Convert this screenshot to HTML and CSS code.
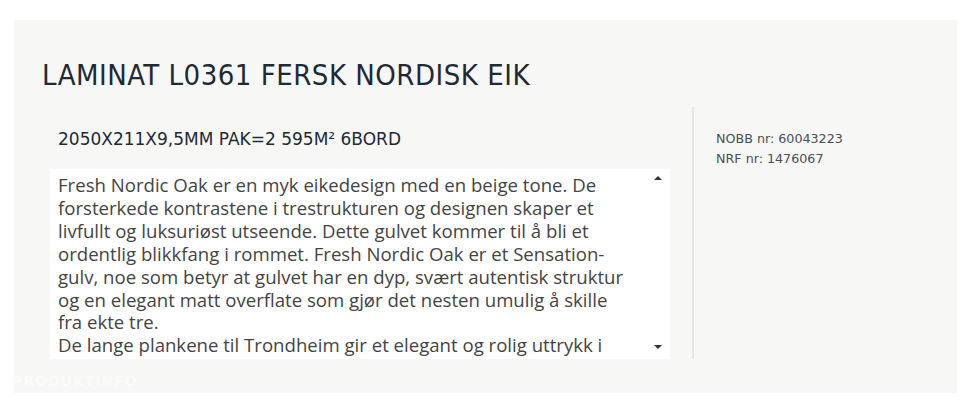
FILE: index.html
```html
<!DOCTYPE html>
<html>

<head>
    <link rel="stylesheet" href="styles.css">
</head>

<body>
    <div class="panel">
        <h1 class="title">LAMINAT L0361 FERSK NORDISK EIK</h1>
        <div class="row">
            <div class="main">
                <h2 class="dims">2050X211X9,5MM PAK=2 595M² 6BORD</h2>
                <div class="desc">
                    <div class="desc-text">Fresh Nordic Oak er en myk eikedesign med en beige tone. De
forsterkede kontrastene i trestrukturen og designen skaper et
livfullt og luksuriøst utseende. Dette gulvet kommer til å bli et
ordentlig blikkfang i rommet. Fresh Nordic Oak er et Sensation-
gulv, noe som betyr at gulvet har en dyp, svært autentisk struktur
og en elegant matt overflate som gjør det nesten umulig å skille
fra ekte tre.
De lange plankene til Trondheim gir et elegant og rolig uttrykk i</div>
                    <div class="scroll">
                        <span class="arrow up"></span>
                        <span class="arrow down"></span>
                    </div>
                </div>
            </div>
            <div class="side">
                <p>NOBB nr: 60043223</p>
                <p>NRF nr: 1476067</p>
            </div>
        </div>
        <div class="label">PRODUKTINFO</div>
    </div>
</body>

</html>
```

FILE: styles.css
```css
body {
    margin: 0;
    background-color: #fff;
    font-family: "DejaVu Sans", sans-serif;
}

.panel {
    margin: 20px 3px 0 14px;
    background-color: #f7f7f5;
    padding: 37px 0 0 28px;
    height: 336px;
}

.title {
    margin: 0;
    font-family: "DejaVu Sans Condensed", sans-serif;
    font-weight: normal;
    font-size: 29px;
    letter-spacing: 0.5px;
    line-height: 36px;
    color: #1e2a36;
}

.row {
    display: flex;
    margin-top: 14px;
}

.main {
    width: 650px;
    padding-left: 8px;
    box-sizing: border-box;
}

.dims {
    margin: 21px 0 19px 8px;
    font-weight: normal;
    font-size: 17px;
    line-height: 22px;
    color: #1e2a36;
}

.desc {
    display: flex;
    background-color: #fff;
    width: 620px;
    height: 190px;
    box-sizing: border-box;
    padding: 5px 6px 0 8px;
    overflow: hidden;
}

.desc-text {
    flex: 1;
    min-width: 0;
    overflow: hidden;
    white-space: pre;
    font-family: "Open Sans", sans-serif;
    font-size: 18.6px;
    line-height: 22.9px;
    color: #444;
}

.scroll {
    display: flex;
    flex-direction: column;
    justify-content: space-between;
    padding: 2px 2px 10px 2px;
}

.arrow {
    width: 0;
    height: 0;
    border-left: 4px solid transparent;
    border-right: 4px solid transparent;
}

.up {
    border-bottom: 4px solid #333;
}

.down {
    border-top: 4px solid #333;
}

.side {
    border-left: 2px solid #e6e6e4;
    padding: 22px 0 0 22px;
    font-size: 12.7px;
    line-height: 20px;
    color: #4a4f55;
}

.side p {
    margin: 0;
}

.label {
    margin: 14px 0 0 -30px;
    font-weight: bold;
    font-size: 14px;
    letter-spacing: 1px;
    color: #fbfbfa;
}
```
